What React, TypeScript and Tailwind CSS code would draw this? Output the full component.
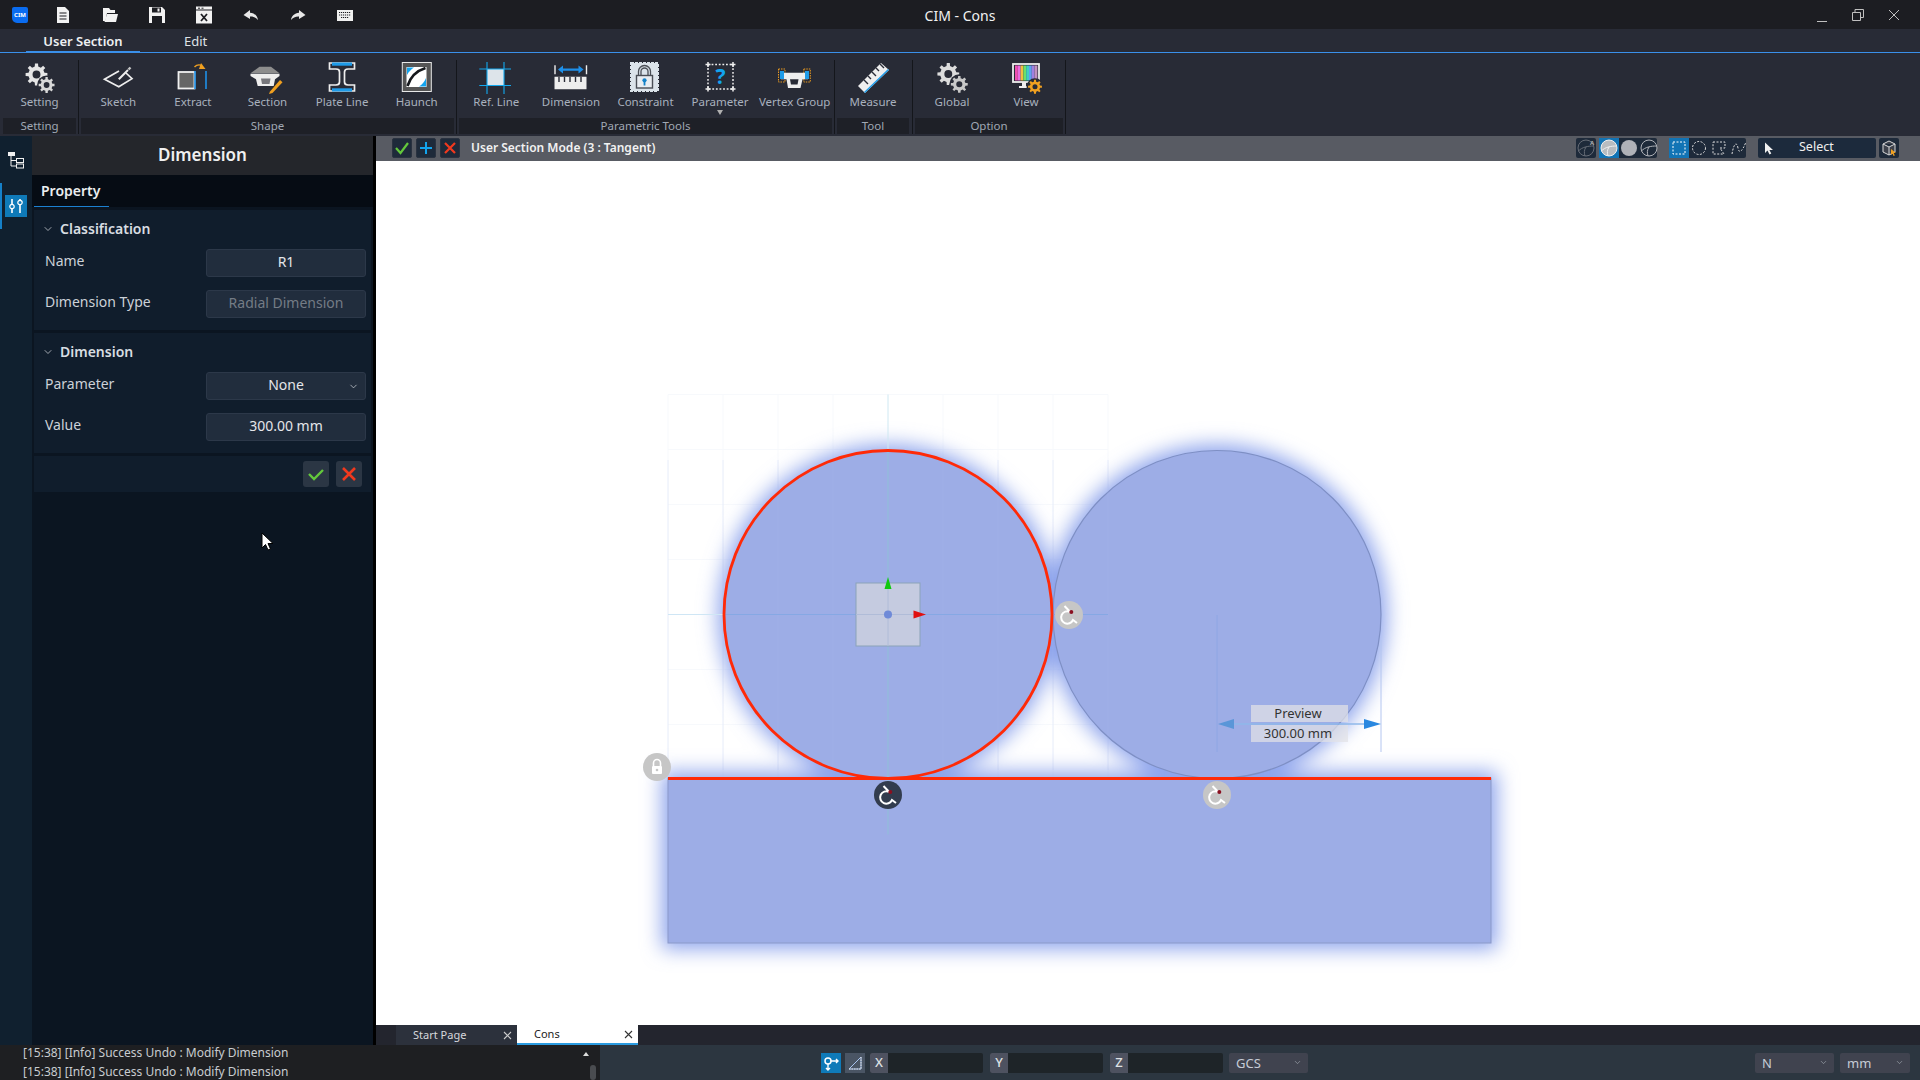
import React from 'react';
import { ChevronDown } from 'lucide-react';

function gearPath(cx: number, cy: number, R: number, n = 8) {
  const inner = R * 0.74;
  const hole = R * 0.36;
  let d = '';
  for (let i = 0; i < n; i++) {
    const a = (i / n) * Math.PI * 2;
    const s = Math.PI / n;
    const pts: [number, number][] = [
      [inner, a - s * 0.55],
      [R, a - s * 0.36],
      [R, a + s * 0.36],
      [inner, a + s * 0.55],
    ];
    pts.forEach(([r, t], j) => {
      d += `${i === 0 && j === 0 ? 'M' : 'L'}${(cx + r * Math.cos(t)).toFixed(2)} ${(cy + r * Math.sin(t)).toFixed(2)} `;
    });
  }
  d += 'Z ';
  d += `M${cx + hole} ${cy} A${hole} ${hole} 0 1 0 ${cx - hole} ${cy} A${hole} ${hole} 0 1 0 ${cx + hole} ${cy} Z`;
  return d;
}

const Gear = ({ cx, cy, r, fill = '#e6e6e6', halo }: { cx: number; cy: number; r: number; fill?: string; halo?: boolean }) => (
  <>
    {halo && <circle cx={cx} cy={cy} r={r + 1.5} fill="#282b36" />}
    <path d={gearPath(cx, cy, r)} fill={fill} fillRule="evenodd" />
  </>
);

const Ico = ({ children, w = 36, h = 32 }: { children: React.ReactNode; w?: number; h?: number }) => (
  <svg width={w} height={h} viewBox={`0 0 ${w} ${h}`} className="block">
    {children}
  </svg>
);

const IconSetting = () => (
  <Ico>
    <Gear cx={14.5} cy={12.5} r={11} />
    <Gear cx={24.6} cy={23} r={8} fill="#d8d8d8" halo />
  </Ico>
);
const IconSketch = () => (
  <Ico>
    <path d="M19 9 L4.5 17.3 L18.8 24.7 L32 16.7 L26 11" fill="none" stroke="#eee" strokeWidth="1.7" />
    <path d="M18.8 17.3 L28 8" stroke="#eee" strokeWidth="2" />
    <path d="M28.5 7.5 L30.5 5.5" stroke="#c8c8c8" strokeWidth="2.4" />
  </Ico>
);
const IconExtract = () => (
  <Ico>
    <rect x="3.5" y="10" width="16" height="16.5" fill="#666" stroke="#f0f0f0" strokeWidth="1.8" />
    <path d="M20 9 V27" stroke="#1e90e8" strokeWidth="1.6" />
    <path d="M31 9 V27" stroke="#1e90e8" strokeWidth="1.6" />
    <path d="M19.5 5 C21.5 2.8 24.5 2.5 27 3.5" fill="none" stroke="#f0a020" strokeWidth="1.4" />
    <path d="M26 1 L30.5 7 L24 7 Z" fill="#f0a020" />
  </Ico>
);
const IconSection = () => (
  <Ico>
    <path d="M10.5 4.7 H22 L30.5 11.3 H1.5 Z" fill="#8d8d8d" />
    <path d="M1.5 11.8 H30.5 V14 L26 17.2 L24.7 24 H8.7 L7 17.2 L1.5 14 Z" fill="#eee" />
    <path d="M12 16.5 H21.5 L20.5 22 H13 Z" fill="#77777c" />
    <path d="M21 29.5 L31 18 L33.5 20.3 L23.5 31 L20 32 Z" fill="#f0a020" />
  </Ico>
);
const IconPlate = () => (
  <Ico>
    <path d="M5.5 1 H30.5 V7 H24 C21.5 7 20.5 8 20.5 10 V20 C20.5 22 21.5 23 24 23 H30.5 V29 H5.5 V23 H12 C14.5 23 15.5 22 15.5 20 V10 C15.5 8 14.5 7 12 7 H5.5 Z" fill="#282b36" stroke="#eee" strokeWidth="1.7" />
    <rect x="8" y="0.5" width="20" height="3.2" fill="#1e9be8" />
    <rect x="8" y="26.3" width="20" height="3.2" fill="#1e9be8" />
  </Ico>
);
const IconHaunch = () => (
  <Ico>
    <rect x="3.3" y="0.5" width="29" height="29" fill="#555" stroke="#e8e8e8" strokeWidth="1" />
    <rect x="7.5" y="5" width="20" height="20" fill="#fff" />
    <path d="M8 5.5 H15 C12 7.5 9.5 10 8 13 Z" fill="#12a4ee" />
    <path d="M27 24.5 H20 C23 22.5 25.5 20 27 16 Z" fill="#12a4ee" />
    <path d="M8.5 24 C11 16 17 9 26.5 6" fill="none" stroke="#16181c" strokeWidth="2.6" />
  </Ico>
);
const IconRef = () => (
  <Ico>
    <rect x="9" y="7" width="17" height="16.5" fill="#dde4ea" />
    <path d="M9 -1 V32 M26 -1 V32 M1.3 7 H33 M1.3 23.5 H33" stroke="#12a8ee" strokeWidth="1.1" />
  </Ico>
);
const IconDim = () => (
  <Ico>
    <path d="M2 3.3 V12.3 M33.5 3.3 V12.3" stroke="#eee" strokeWidth="1.4" />
    <path d="M5 7.6 L10 3.6 V6.4 H25.5 V3.6 L30.5 7.6 L25.5 11.6 V8.8 H10 V11.6 Z" fill="#1e8fe8" />
    <path d="M1.5 14.7 H33.5 V27.3 H1.5 Z" fill="#eee" />
    <path d="M6 14.7 V20 M11.5 14.7 V20 M17 14.7 V20 M22.5 14.7 V20 M28 14.7 V20" stroke="#282b36" strokeWidth="1.4" />
  </Ico>
);
const IconConstraint = () => (
  <Ico>
    <rect x="4" y="1" width="27" height="28" fill="#dbe3ea" stroke="#dbe3ea" strokeWidth="2" strokeDasharray="3 1" />
    <path d="M11.5 13.5 V9.5 a6 6 0 0 1 12 0 V13.5 M14 13.5 V9.5 a3.5 3.5 0 0 1 7 0 V13.5" fill="none" stroke="#4a4e56" strokeWidth="1.3" />
    <rect x="9.5" y="13.5" width="16" height="12.5" fill="#e8edf2" stroke="#4a4e56" strokeWidth="1.4" />
    <circle cx="17.5" cy="18.3" r="2.1" fill="#1482c8" />
    <rect x="16.6" y="18.5" width="1.8" height="5" fill="#1482c8" />
  </Ico>
);
const IconParam = () => (
  <svg width="36" height="32" viewBox="0 0 36 32" className="block">
    <rect x="6" y="2.5" width="25" height="24.5" fill="none" stroke="#eee" strokeWidth="1.5" strokeDasharray="1.8 1.8" />
    <path d="M6 0 V5 M3.5 2.5 H8.5 M31 0 V5 M28.5 2.5 H33.5 M6 24.5 V29.5 M3.5 27 H8.5 M31 24.5 V29.5 M28.5 27 H33.5" stroke="#eee" strokeWidth="1.5" />
    <text x="18.5" y="22" textAnchor="middle" fontSize="21" fontWeight="700" fill="#12a4ee">?</text>
  </svg>
);
const IconVertex = () => (
  <Ico w={36}>
    <rect x="1.5" y="7" width="6.5" height="13" fill="none" stroke="#e89a20" strokeDasharray="1.5 1" />
    <rect x="26.8" y="7" width="6.5" height="13" fill="none" stroke="#e89a20" strokeDasharray="1.5 1" />
    <path d="M4 10.7 H31 V17.3 H25.5 L23.5 26 H11 L9.5 17.3 H4 Z" fill="#eee" />
    <path d="M13 17.3 H21.5 L20.5 22.5 H14 Z" fill="#282b36" />
    <rect x="3" y="9" width="4" height="8" fill="#1e9be8" />
    <rect x="28" y="9" width="4" height="8" fill="#1e9be8" />
  </Ico>
);
const IconMeasure = () => (
  <Ico>
    <path d="M3 24 L26 1 L34 8 L10 31 Z" fill="#eee" />
    <path d="M10 31 L34 8 L33 7 L9 30 Z" fill="#1e9be8" />
    <path d="M9 18 l4 4 M13 14 l3 3 M17 10 l4 4 M21 6 l3 3 M25 2 l4 4" stroke="#282b36" strokeWidth="1.4" />
  </Ico>
);
const IconGlobal = () => (
  <Ico>
    <Gear cx={14.3} cy={12} r={11} fill="#dcdcdc" />
    <Gear cx={25.3} cy={22.3} r={8.5} fill="#c8c8c8" halo />
  </Ico>
);
const IconView = () => {
  const cols = ['#f04fb0', '#e86adf', '#f0c040', '#6be06b', '#40d0c0', '#60a0f0', '#a080e0', '#c090c0'];
  return (
    <Ico>
      <rect x="5" y="2" width="26" height="18" fill="#282b36" stroke="#eee" strokeWidth="1.8" />
      {cols.map((c, i) => (
        <rect key={c} x={7 + i * 2.8} y="3.5" width="2.8" height="15" fill={c} />
      ))}
      <path d="M14 20 H18 V24 H22 V26 H11 V24 H14 Z" fill="#eee" />
      <Gear cx={27} cy={24.7} r={7} fill="#f0a020" halo />
    </Ico>
  );
};

const TopIcon = ({ children }: { children: React.ReactNode }) => (
  <div className="flex w-[47px] flex-none justify-center">
    <svg width="18" height="18" viewBox="0 0 18 18" className="block">
      {children}
    </svg>
  </div>
);

const RibbonItem = ({ icon, label, drop }: { icon: React.ReactNode; label: string; drop?: boolean }) => (
  <div className="flex min-w-0 flex-1 flex-col items-center pt-[9px]">
    {icon}
    <div className="mt-[1px] whitespace-nowrap text-[11.5px] leading-[14px] text-[#a9b1be]">{label}</div>
    {drop && (
      <svg width="6" height="5" viewBox="0 0 6 5" className="mt-[1px] block">
        <path d="M0 0 H6 L3 5 Z" fill="#b0b0b0" />
      </svg>
    )}
  </div>
);

const RibbonGroup = ({ width, title, children }: { width: string; title: string; children: React.ReactNode }) => (
  <div className={`flex flex-none flex-col ${width}`}>
    <div className="flex h-[65px] overflow-hidden">{children}</div>
    <div className="h-[16px] bg-[#1e2027] text-center text-[11.5px] leading-[16px] text-[#a0a8b4]">{title}</div>
  </div>
);

const Sep = ({ className }: { className: string }) => (
  <div className={`mb-[2px] mt-[7px] flex flex-none justify-center self-stretch ${className}`}>
    <div className="w-px bg-[#14161b]" />
  </div>
);

const Field = ({ label, value, muted, select }: { label: string; value: string; muted?: boolean; select?: boolean }) => (
  <div className="flex h-[28px] items-center justify-between pl-[11px] pr-[5px]">
    <div className="pb-[4px] text-[14px] leading-[18px] text-[#ccd1d8]">{label}</div>
    <div className="relative flex h-[28px] w-[160px] items-center justify-center rounded-[3px] border border-[#2c3849] bg-[#212d3d]">
      <span className={`pb-[2px] text-[14px] leading-[18px] ${muted ? 'text-[#747c86]' : 'text-[#e4e6ea]'}`}>{value}</span>
      {select && <ChevronDown size={11} strokeWidth={1.6} className="absolute right-[6px] top-[8px] text-[#d0d4da]" />}
    </div>
  </div>
);

const Section = ({ title, children }: { title: string; children: React.ReactNode }) => (
  <div className="bg-[#101d2c] pb-[12px]">
    <div className="flex h-[39px] items-center pb-[1px] pl-[8px]">
      <ChevronDown size={12} strokeWidth={1.6} className="text-[#c4c8ce]" />
      <span className="ml-[6px] text-[14px] font-semibold leading-[18px] text-[#d8dde2]">{title}</span>
    </div>
    <div className="flex flex-col gap-[13px]">{children}</div>
  </div>
);

const Rotate = ({ cx, cy, fill }: { cx: number; cy: number; fill: string }) => (
  <g>
    <circle cx={cx} cy={cy} r={14} fill={fill} />
    <path
      d={`M${cx - 4.5} ${cy - 9} L${cx + 1} ${cy - 3.2} M${cx + 1} ${cy - 3.2} A6.2 6.2 0 1 0 ${cx + 4} ${cy + 5} L${cx + 8} ${cy + 8}`}
      fill="none"
      stroke="#fff"
      strokeWidth="2"
    />
    <circle cx={cx + 2.3} cy={cy - 3} r={2} fill="#8a1020" />
  </g>
);

const SmallBtn = ({ children, className = '' }: { children: React.ReactNode; className?: string }) => (
  <div className={`flex h-[20px] w-[20px] flex-none items-center justify-center ${className}`}>
    <svg width="18" height="18" viewBox="0 0 18 18" className="block">
      {children}
    </svg>
  </div>
);

const Sphere = ({ fill, stroke }: { fill: string; stroke: string }) => (
  <>
    <circle cx="9" cy="9" r="8" fill={fill} stroke={stroke} strokeWidth="1" />
    <path d="M1.5 12 C5 8 11 7 16.5 7 M9 8 C7 11 7 14 8 17" fill="none" stroke={stroke} strokeWidth="1" />
  </>
);

const Coord = ({ label }: { label: string }) => (
  <div className="flex h-[20px] w-[113px] flex-none overflow-hidden rounded-[2px] bg-[#1e2428]">
    <div className="flex w-[18px] items-center justify-center bg-[#4e5260] text-[13px] font-medium text-[#dfe1e5]">{label}</div>
  </div>
);

const StatusSelect = ({ label, width }: { label: string; width: string }) => (
  <div className={`flex h-[20px] flex-none items-center justify-between rounded-[2px] bg-[#40434f] pl-[7px] pr-[6px] ${width}`}>
    <span className="text-[13px] leading-[16px] text-[#c6ccd6]">{label}</span>
    <ChevronDown size={9} strokeWidth={1.6} className="text-[#aab0b8]" />
  </div>
);

const Tab = ({ label, active }: { label: string; active?: boolean }) => (
  <div
    className={`flex h-[20px] w-[121px] flex-none items-center justify-between pl-[17px] pr-[5px] text-[11px] ${
      active ? 'border-b-2 border-[#2a9be0] bg-white text-[#222]' : 'bg-[#2c313c] text-[#d6d8dc]'
    }`}
  >
    <span>{label}</span>
    <svg width="9" height="9" viewBox="0 0 9 9" className="block">
      <path d="M1 1 L8 8 M8 1 L1 8" stroke={active ? '#333' : '#ccc'} strokeWidth="1.1" />
    </svg>
  </div>
);

export default function App() {
  const gridX = [668, 723, 778, 833, 943, 998, 1053, 1108];
  const gridY = [394.5, 449.5, 504.5, 559.5, 669.5, 724.5, 779.5, 834.5];
  return (
    <div className="flex h-[1080px] w-[1920px] flex-col overflow-hidden bg-black font-['Noto_Sans',sans-serif]">
      {/* Title bar */}
      <div className="relative flex h-[29px] flex-none items-center bg-[#1c1d22]">
        <div className="flex w-[39px] flex-none pl-[12px]">
          <div className="flex h-[16px] w-[16px] items-center justify-center rounded-[2px] rounded-bl-[5px] bg-[#0a6cf0] text-[6px] font-bold leading-none text-white">
            CIM
          </div>
        </div>
        <TopIcon>
          <path d="M3 1 H11 L15 5 V17 H3 Z" fill="#f2f2f2" />
          <path d="M5.5 7 H12.5 M5.5 10 H12.5 M5.5 13 H12.5" stroke="#1c1d22" strokeWidth="1.1" />
        </TopIcon>
        <TopIcon>
          <path d="M2 2 H8 L9.5 4 H14 V7 H6 L4.5 15 H2 Z" fill="#f2f2f2" />
          <path d="M6 8 H17 L15 16 H3.5 Z" fill="#f2f2f2" />
        </TopIcon>
        <TopIcon>
          <path d="M1 1 H14 L17 4 V17 H1 Z" fill="#f2f2f2" />
          <rect x="4" y="1.5" width="9" height="5" fill="#1c1d22" />
          <rect x="4" y="10" width="10" height="7" fill="#1c1d22" />
          <rect x="9.5" y="2.5" width="2" height="3" fill="#f2f2f2" />
        </TopIcon>
        <TopIcon>
          <rect x="1" y="0.5" width="16" height="17" fill="#f2f2f2" />
          <path d="M1 4 H17" stroke="#1c1d22" strokeWidth="1" />
          <path d="M3 2.2 H5 M6.5 2.2 H8.5" stroke="#1c1d22" strokeWidth="1" />
          <path d="M6 8 L12 15 M12 8 L6 15" stroke="#1c1d22" strokeWidth="1.8" />
        </TopIcon>
        <TopIcon>
          <path d="M8 4 L1.5 9 L8 13 V10.4 C11.5 10.2 14 11.5 16 14 C15.4 10 12.5 7 8 6.7 Z" fill="#e8e8e8" />
        </TopIcon>
        <TopIcon>
          <path d="M10 4 L16.5 9 L10 13 V10.4 C6.5 10.2 4 11.5 2 14 C2.6 10 5.5 7 10 6.7 Z" fill="#e8e8e8" />
        </TopIcon>
        <TopIcon>
          <rect x="1" y="4" width="16" height="11" fill="#f0f0f0" />
          <path
            d="M3 6.5 H15 M3 9 H15 M5 11.5 H13"
            stroke="#1c1d22"
            strokeWidth="1"
            strokeDasharray="1.2 0.8"
          />
        </TopIcon>
        <div className="absolute left-0 right-0 top-[6px] text-center text-[14px] leading-[20px] text-[#f2f2f2]">CIM - Cons</div>
        <div className="ml-auto flex items-center gap-[22px] pr-[19px]">
          <svg width="14" height="14" viewBox="0 0 14 14" className="block">
            <path d="M2 13.5 H12" stroke="#c0c0c0" strokeWidth="1" />
          </svg>
          <svg width="14" height="14" viewBox="0 0 14 14" className="block">
            <path d="M1.5 4.5 H9.5 V12.5 H1.5 Z M4 4.5 V1.5 H12.5 V9.5 H9.5" fill="none" stroke="#c0c0c0" strokeWidth="1" />
          </svg>
          <svg width="14" height="14" viewBox="0 0 14 14" className="block">
            <path d="M2 2 L12 12 M12 2 L2 12" stroke="#c0c0c0" strokeWidth="1" />
          </svg>
        </div>
      </div>

      {/* Tabs */}
      <div className="flex h-[24px] flex-none border-b border-[#3a90ea] bg-[#282b36] pl-[26px]">
        <div className="flex w-[114px] justify-center border-b border-[#3a90ea] pt-[2px] text-[13px] font-semibold leading-[20px] text-[#eef0f2]">User Section</div>
        <div className="ml-[44px] pt-[2px] text-[13px] leading-[20px] text-[#dfe2e6]">Edit</div>
      </div>

      {/* Ribbon */}
      <div className="flex h-[83px] flex-none bg-[#282b36] pl-[3px]">
        <RibbonGroup width="w-[73px]" title="Setting">
          <RibbonItem icon={<IconSetting />} label="Setting" />
        </RibbonGroup>
        <Sep className="w-[5px]" />
        <RibbonGroup width="w-[373px]" title="Shape">
          <RibbonItem icon={<IconSketch />} label="Sketch" />
          <RibbonItem icon={<IconExtract />} label="Extract" />
          <RibbonItem icon={<IconSection />} label="Section" />
          <RibbonItem icon={<IconPlate />} label="Plate Line" />
          <RibbonItem icon={<IconHaunch />} label="Haunch" />
        </RibbonGroup>
        <Sep className="w-[5px]" />
        <RibbonGroup width="w-[373px]" title="Parametric Tools">
          <RibbonItem icon={<IconRef />} label="Ref. Line" />
          <RibbonItem icon={<IconDim />} label="Dimension" />
          <RibbonItem icon={<IconConstraint />} label="Constraint" />
          <RibbonItem icon={<IconParam />} label="Parameter" drop />
          <RibbonItem icon={<IconVertex />} label="Vertex Group" />
        </RibbonGroup>
        <Sep className="w-[5px]" />
        <RibbonGroup width="w-[72px]" title="Tool">
          <RibbonItem icon={<IconMeasure />} label="Measure" />
        </RibbonGroup>
        <Sep className="w-[6px]" />
        <RibbonGroup width="w-[148px]" title="Option">
          <RibbonItem icon={<IconGlobal />} label="Global" />
          <RibbonItem icon={<IconView />} label="View" />
        </RibbonGroup>
        <Sep className="w-[5px]" />
      </div>

      {/* Main */}
      <div className="flex min-h-0 flex-1">
        {/* Rail */}
        <div className="flex w-[32px] flex-none flex-col bg-[#10202f]">
          <div className="flex h-[47px] items-center justify-center">
            <svg width="18" height="18" viewBox="0 0 18 18" className="block">
              <rect x="1" y="1" width="7" height="4" fill="#f0f0f0" />
              <path d="M4 5 V15 H9 M4 9.5 H9" fill="none" stroke="#f0f0f0" strokeWidth="1" />
              <rect x="9.5" y="7.5" width="7" height="4" fill="none" stroke="#f0f0f0" />
              <rect x="9.5" y="13" width="7" height="4" fill="none" stroke="#f0f0f0" />
            </svg>
          </div>
          <div className="flex h-[46px] items-center border-l-2 border-[#1580c8] pl-[3px]">
            <div className="flex h-[22px] w-[22px] items-center justify-center bg-[#0f7ab8]">
              <svg width="16" height="16" viewBox="0 0 16 16" className="block">
                <path d="M4 1 V6 M4 11 V15 M12 1 V2 M12 7 V15" stroke="#fff" strokeWidth="1.6" />
                <circle cx="4" cy="8.5" r="2.2" fill="none" stroke="#fff" strokeWidth="1.2" />
                <circle cx="12" cy="4.5" r="2.2" fill="none" stroke="#fff" strokeWidth="1.2" />
              </svg>
            </div>
          </div>
        </div>

        {/* Panel */}
        <div className="relative flex w-[341px] flex-none flex-col bg-[#0b1521]">
          <div className="flex h-[39px] flex-none items-center justify-center bg-[#24262b] pb-[2px] text-[17px] font-semibold leading-[24px] text-[#f0f0f0]">Dimension</div>
          <div className="h-[32px] flex-none bg-[#060c14] pl-[2px]">
            <div className="h-[32px] w-[75px] border-b border-[#1c80d0] pl-[7px] pt-[6px] text-[14px] font-semibold leading-[20px] text-[#eceef0]">Property</div>
          </div>
          <div className="flex flex-col gap-[3px] px-[2px] pt-[3px]">
            <Section title="Classification">
              <Field label="Name" value="R1" />
              <Field label="Dimension Type" value="Radial Dimension" muted />
            </Section>
            <Section title="Dimension">
              <Field label="Parameter" value="None" select />
              <Field label="Value" value="300.00 mm" />
            </Section>
            <div className="flex h-[36px] items-center justify-end gap-[7px] bg-[#101d2c] pr-[9px]">
              <div className="flex h-[26px] w-[26px] items-center justify-center rounded-[3px] bg-[#2b3644]">
                <svg width="18" height="18" viewBox="0 0 18 18" className="block">
                  <path d="M2 9 L7 14 L16 5" fill="none" stroke="#63c83c" strokeWidth="2.4" />
                </svg>
              </div>
              <div className="flex h-[26px] w-[26px] items-center justify-center rounded-[3px] bg-[#2b3644]">
                <svg width="18" height="18" viewBox="0 0 18 18" className="block">
                  <path d="M3 3 L15 15 M15 3 L3 15" stroke="#f0391e" strokeWidth="2.6" />
                </svg>
              </div>
            </div>
          </div>
          <svg width="14" height="20" viewBox="0 0 14 20" className="absolute left-[229px] top-[396px] block">
            <path d="M1 1 V16 L4.5 12.5 L7 18 L9.5 17 L7 11.5 L12 11.5 Z" fill="#fff" stroke="#000" strokeWidth="1" />
          </svg>
        </div>

        <div className="w-[3px] flex-none bg-black" />

        {/* Viewport */}
        <div className="flex min-w-0 flex-1 flex-col bg-white">
          <div className="flex h-[25px] flex-none items-center bg-[#585b63] pb-[1px] pl-[16px]">
            <div className="flex gap-[4px]">
              <SmallBtn className="rounded-[2px] border border-[#2a3240] bg-[#1e2a3a]">
                <path d="M3 9 L7.5 14 L15 4" fill="none" stroke="#63c83c" strokeWidth="2.2" />
              </SmallBtn>
              <SmallBtn className="rounded-[2px] border border-[#2a3240] bg-[#1e2a3a]">
                <path d="M9 3 V15 M3 9 H15" stroke="#12a4ee" strokeWidth="2" />
              </SmallBtn>
              <SmallBtn className="rounded-[2px] border border-[#2a3240] bg-[#1e2a3a]">
                <path d="M4 4 L14 14 M14 4 L4 14" stroke="#f0391e" strokeWidth="2.2" />
              </SmallBtn>
            </div>
            <div className="ml-[11px] pb-[1px] text-[12px] font-semibold leading-[16px] text-[#f2f2f2]">User Section Mode (3 : Tangent)</div>
            <div className="ml-auto flex items-center pr-[21px]">
              <SmallBtn className="rounded-[2px] bg-[#1e2a3a]">
                <Sphere fill="none" stroke="#666c76" />
                <text x="13" y="6" fontSize="6" fontWeight="700" fill="#aaa">A</text>
              </SmallBtn>
              <div className="ml-[3px] flex w-[58px] rounded-[2px] bg-[#1e2a3a]">
                <SmallBtn className="bg-[#1274b5]">
                  <Sphere fill="#b8bcc0" stroke="#f0f0f0" />
                </SmallBtn>
                <SmallBtn>
                  <circle cx="9" cy="9" r="8" fill="#b0b2b8" />
                </SmallBtn>
                <SmallBtn>
                  <Sphere fill="none" stroke="#b0b2b8" />
                </SmallBtn>
              </div>
              <div className="ml-[12px] flex w-[77px] rounded-[2px] bg-[#1e2a3a]">
                <SmallBtn className="bg-[#1274b5]">
                  <rect x="3" y="3" width="12" height="12" fill="none" stroke="#fff" strokeDasharray="2 1.5" />
                </SmallBtn>
                <SmallBtn>
                  <circle cx="9" cy="9" r="6.5" fill="none" stroke="#ddd" strokeDasharray="2 1.5" />
                </SmallBtn>
                <SmallBtn>
                  <path d="M3 3 H15 V9 L10 9 L14 15 H3 Z" fill="none" stroke="#ddd" strokeDasharray="2 1.5" />
                </SmallBtn>
                <SmallBtn>
                  <path d="M2 15 C4 3 7 3 8 9 C9 15 12 13 16 3" fill="none" stroke="#ddd" strokeDasharray="2 1.5" />
                </SmallBtn>
              </div>
              <div className="ml-[12px] flex h-[20px] w-[118px] items-center rounded-[2px] bg-[#1c2a3c] pl-[6px]">
                <svg width="10" height="13" viewBox="0 0 10 13" className="block">
                  <path d="M1 0.5 V11 L3.5 8.5 L5.5 12.5 L7.3 11.5 L5.4 8 L9 8 Z" fill="#f0f0f0" />
                </svg>
                <span className="ml-[25px] pb-[2px] text-[12.5px] leading-[16px] text-[#f0f0f0]">Select</span>
              </div>
              <SmallBtn className="ml-[3px] rounded-[2px] bg-[#1e2a3a]">
                <path d="M9 2 L15 5 V13 L9 16 L3 13 V5 Z M3 5 L9 8 L15 5 M9 8 V16" fill="#3e424c" stroke="#d8d8d8" strokeWidth="1" />
                <path d="M11 10 V16 L12.5 14.6 L13.6 17 L14.8 16.4 L13.7 14 H16 Z" fill="#f0a020" />
              </SmallBtn>
            </div>
          </div>

          <div className="min-h-0 flex-1">
            <svg viewBox="376 161 1544 864" className="block h-full w-full">
              <defs>
                <filter id="glow" x="-10%" y="-20%" width="120%" height="140%">
                  <feGaussianBlur stdDeviation="10" />
                </filter>
              </defs>
              {gridX.map((x) => (
                <path key={x} d={`M${x} 394.5 V834.5`} stroke="#f7f9fc" strokeWidth="1" />
              ))}
              {gridY.map((y) => (
                <path key={y} d={`M668 ${y} H1108`} stroke="#f7f9fc" strokeWidth="1" />
              ))}
              <g filter="url(#glow)" fill="#8ea4ec">
                <circle cx="888" cy="614.5" r="170" />
                <circle cx="1217" cy="614.5" r="170" />
                <rect x="662" y="772" width="835" height="177" />
              </g>
              <circle cx="1217" cy="614.5" r="164" fill="#9dade6" stroke="#7e8fc4" strokeWidth="1.2" />
              <rect x="668" y="778" width="823" height="165" fill="#9dade6" stroke="#8b9ac9" strokeWidth="1" />
              <circle cx="888" cy="614.5" r="164" fill="#9dade6" />
              {gridX.map((x) => (
                <path key={x} d={`M${x} 460 V770`} stroke="#a8b8ec" strokeWidth="1" opacity="0.2" />
              ))}
              <path d="M668 614.5 H723" stroke="#cfe6f5" strokeWidth="1" />
              <path d="M723 614.5 H1108" stroke="#86a8e4" strokeWidth="1" />
              <path d="M888 394.5 V450" stroke="#cfe8f2" strokeWidth="1" />
              <path d="M888 450 V834.5" stroke="#8fc0d8" strokeWidth="1" />
              <rect x="856" y="583" width="64" height="63" fill="#c5cbe0" stroke="#8ba3b8" strokeWidth="1" />
              <path d="M856 614.5 H920 M888 583 V646" stroke="#b0bcd8" strokeWidth="1" />
              <circle cx="888" cy="614.5" r="4" fill="#6f8ad8" />
              <path d="M888 577 L884.5 589 H891.5 Z" fill="#10c810" />
              <path d="M926 614.5 L913.5 610.5 V618.5 Z" fill="#e01010" />
              <circle cx="888" cy="614.5" r="164" fill="none" stroke="#ff2a08" strokeWidth="2.8" />
              <path d="M668 778.5 H1491" stroke="#ff2a08" strokeWidth="2.8" />
              <path d="M1217 615 V752" stroke="#8ea6e4" strokeWidth="1" />
              <path d="M1381 640 V752" stroke="#b4c6f0" strokeWidth="1" />
              <path d="M1234 724 H1364" stroke="#8fb8ea" strokeWidth="1.5" />
              <path d="M1218 724 L1234 719 V729 Z" fill="#5a96d8" />
              <path d="M1381 724 L1364 719 V729 Z" fill="#2a88e0" />
              <rect x="1251" y="705" width="97" height="17" fill="#e2e2e6" opacity="0.72" />
              <rect x="1251" y="725" width="97" height="17" fill="#e2e2e6" opacity="0.72" />
              <text x="1298" y="718" textAnchor="middle" fontSize="13" fill="#333">Preview</text>
              <text x="1298" y="738" textAnchor="middle" fontSize="13" fill="#333">300.00 mm</text>
              <Rotate cx={1069} cy={615} fill="#c6c6c6" />
              <Rotate cx={888} cy={795} fill="#323c4e" />
              <Rotate cx={1217} cy={795} fill="#c6c6c6" />
              <circle cx="657" cy="767" r="14" fill="#c6c6c6" />
              <path d="M653.5 766 V763 a3.5 3.5 0 0 1 7 0 V766" fill="none" stroke="#fff" strokeWidth="1.6" />
              <rect x="652" y="766" width="10" height="8" rx="1" fill="#fff" />
              <circle cx="657" cy="770" r="1.3" fill="#c6c6c6" />
            </svg>
          </div>

          <div className="flex h-[20px] flex-none bg-[#23252e] pl-[20px]">
            <Tab label="Start Page" />
            <Tab label="Cons" active />
          </div>
        </div>
      </div>

      {/* Status */}
      <div className="flex h-[35px] flex-none">
        <div className="flex w-[600px] flex-none justify-between bg-[#1e1f22] pl-[23px] pr-[4px]">
          <div className="flex flex-col gap-[4px] pt-[0px] text-[12px] leading-[15px] text-[#c8ccd0]">
            <div>[15:38] [Info] Success Undo : Modify Dimension</div>
            <div>[15:38] [Info] Success Undo : Modify Dimension</div>
          </div>
          <div className="flex gap-[1px]">
            <div className="w-[6px] pt-[7px]">
              <svg width="6" height="4" viewBox="0 0 6 4" className="block">
                <path d="M3 0 L6 4 H0 Z" fill="#ddd" />
              </svg>
            </div>
            <div className="mt-[20px] h-[15px] w-[6px] rounded-[3px] bg-[#4a4c50]" />
          </div>
        </div>
        <div className="flex flex-1 items-center bg-[#2c3640] pl-[221px] pr-[10px]">
          <SmallBtn className="bg-[#0f7ab8]">
            <circle cx="6" cy="7" r="3" fill="none" stroke="#fff" strokeWidth="1.5" />
            <path d="M6 10 V16 M4 14 L6 16 L8 14 M9 7 H16 M14 5 L16 7 L14 9" fill="none" stroke="#fff" strokeWidth="1.4" />
          </SmallBtn>
          <SmallBtn className="ml-[4px] bg-[#4a5564]">
            <path d="M3 15 L15 3 V15 Z" fill="none" stroke="#a8c4f0" strokeWidth="1" />
            <path d="M3 15 H15 V3" fill="none" stroke="#ddd" strokeWidth="1" strokeDasharray="1.5 1" />
          </SmallBtn>
          <div className="ml-[5px] flex gap-[7px]">
            <Coord label="X" />
            <Coord label="Y" />
            <Coord label="Z" />
          </div>
          <StatusSelect label="GCS" width="ml-[6px] w-[79px]" />
          <StatusSelect label="N" width="ml-auto w-[79px]" />
          <StatusSelect label="mm" width="ml-[6px] w-[70px]" />
        </div>
      </div>
    </div>
  );
}
